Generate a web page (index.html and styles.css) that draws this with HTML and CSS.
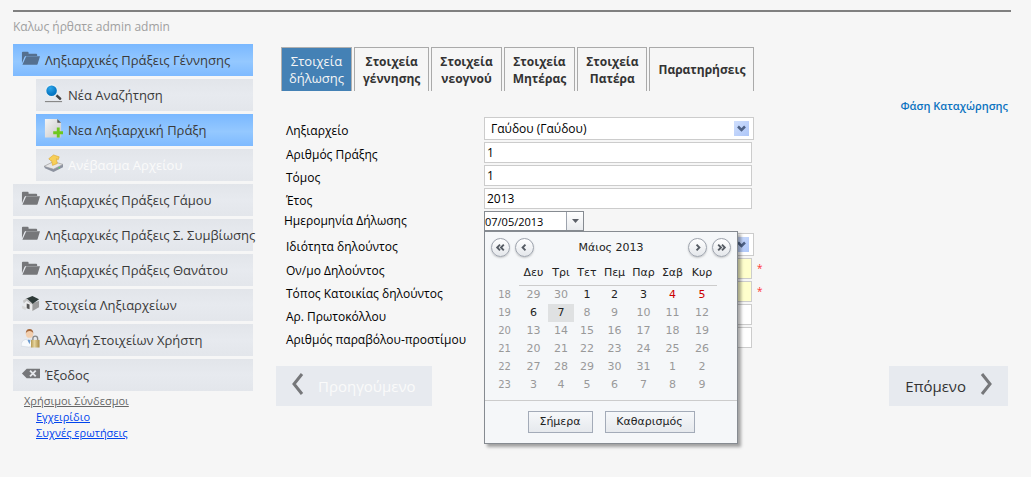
FILE: index.html
```html
<!DOCTYPE html>
<html lang="el">
<head>
<meta charset="utf-8">
<title>Στοιχεία δήλωσης</title>
<link rel="stylesheet" href="styles.css">
</head>
<body>
<svg class="defs" aria-hidden="true">
  <defs>
    <linearGradient id="paper" x1="0" y1="0" x2="1" y2="1"><stop offset="0" stop-color="#f4f4f4"/><stop offset="1" stop-color="#c8c8c8"/></linearGradient>
    <radialGradient id="lens" cx=".4" cy=".3"><stop offset="0" stop-color="#2ea6ea"/><stop offset="1" stop-color="#0878c4"/></radialGradient>
    <linearGradient id="gold" x1="0" y1="0" x2="1" y2="0"><stop offset="0" stop-color="#b59a55"/><stop offset=".4" stop-color="#e6d49c"/><stop offset="1" stop-color="#a88a42"/></linearGradient>
    <symbol id="folder" viewBox="0 0 20 20"><path d="M1 15V4q0-1 1-1h5q1 0 1 1v1h8q1 0 1 1v1.300H5.500q-1.500 0-2 1.500z"/><path d="M5.500 7.700H20l-2.500 8q-.3 1-1.500 1H1.500z"/></symbol>
  </defs>
</svg>
<div class="page">
  <hr class="rule">
  <p class="welcome">Καλως ήρθατε admin admin</p>
  <div class="columns">
    <nav class="sidebar">
      <a class="item active" href="#"><svg class="icon slate"><use href="#folder"/></svg>Ληξιαρχικές Πράξεις Γέννησης</a>
      <a class="item sub" href="#"><svg class="icon" viewBox="0 0 20 20"><path d="M1 18.500h18" stroke="#888" stroke-width="1.200"/><path d="M12 11l5 4.500" stroke="#444" stroke-width="2.600" stroke-linecap="round"/><circle cx="8" cy="7" r="6.300" fill="url(#lens)" stroke="#e9eef2" stroke-width="1.500"/></svg>Νέα Αναζήτηση</a>
      <a class="item sub active" href="#"><svg class="icon" viewBox="0 0 20 20"><path d="M1 0h13l4 4v15.500H1z" fill="url(#paper)"/><path d="M14 0l4 4h-4z" fill="#555"/><path d="M15 9v10.500M9.700 14.500h10.300" stroke="#6ec81e" stroke-width="3"/></svg>Νεα Ληξιαρχική Πράξη</a>
      <a class="item sub disabled" href="#"><svg class="icon" viewBox="0 0 20 20"><path d="M0 13l10-5 10 3-10 5z" fill="#e6e6e8" stroke="#999" stroke-width=".7"/><path d="M0 13l10 3v3L1 15zM10 16l10-5v3l-10 5z" fill="#8d93a0"/><path d="M7 7L5 5l5-4 6 2-1 3-2-1 1 5-5 2-1-5z" fill="#f7cf58" stroke="#d9a128" stroke-width=".6"/><circle cx="16" cy="14.500" r=".8" fill="#48e060"/></svg>Ανέβασμα Αρχείου</a>
      <a class="item" href="#"><svg class="icon gray"><use href="#folder"/></svg>Ληξιαρχικές Πράξεις Γάμου</a>
      <a class="item" href="#"><svg class="icon gray"><use href="#folder"/></svg>Ληξιαρχικές Πράξεις Σ. Συμβίωσης</a>
      <a class="item" href="#"><svg class="icon gray"><use href="#folder"/></svg>Ληξιαρχικές Πράξεις Θανάτου</a>
      <a class="item" href="#"><svg class="icon" viewBox="0 0 20 20"><path d="M4 8l8 2v8l-8-4z" fill="#ececec"/><path d="M12 10l7-3v7l-7 4z" fill="#9c9c9c"/><path d="M5 5l7-3 7 3.500-7 5z" fill="#2e3a38"/><path d="M2 7l4-2.500 6 5.500-1 1-5-4-3 3z" fill="#c4c4c4"/><path d="M6 10l3 1v5l-3-1z" fill="#555"/><path d="M1 12l4 2v3l-4-2z" fill="#d8d8d8"/></svg>Στοιχεία Ληξιαρχείων</a>
      <a class="item" href="#"><svg class="icon" viewBox="0 0 20 20"><path d="M0 18q0-6 5-7l3 1 4-1q4 1 4 7-8 2-16 0z" fill="#f8fafc" stroke="#c9d2de" stroke-width=".6"/><path d="M8 11l2 1-1 4-2-4z" fill="#6c9bd0"/><circle cx="9" cy="5.500" r="3.800" fill="#f3cfae"/><path d="M5 5q0-5 4-5t4 5q-1-3-4-3T5 5z" fill="#a5673a"/><path d="M12.500 12v-2q0-2.500 2.500-2.500t2.500 2.500v2" fill="none" stroke="#888" stroke-width="1.400"/><rect x="10.500" y="11.500" width="9" height="8" fill="url(#gold)"/></svg>Αλλαγή Στοιχείων Χρήστη</a>
      <a class="item" href="#"><svg class="icon" viewBox="0 0 20 20"><path d="M1 10l5-5h14v10H6z" fill="#76777a"/><path d="M9.500 7l6 6M15.500 7l-6 6" stroke="#e6e8ec" stroke-width="2"/></svg>Έξοδος</a>
      <div class="links">
        <span class="links-title">Χρήσιμοι Σύνδεσμοι</span>
        <a href="#">Εγχειρίδιο</a>
        <a href="#">Συχνές ερωτήσεις</a>
      </div>
    </nav>
    <main class="main">
      <div class="tabs" role="tablist">
        <button class="tab current" role="tab" aria-selected="true">Στοιχεία<br>δήλωσης</button>
        <button class="tab" role="tab">Στοιχεία<br>γέννησης</button>
        <button class="tab" role="tab">Στοιχεία<br>νεογνού</button>
        <button class="tab" role="tab">Στοιχεία<br>Μητέρας</button>
        <button class="tab" role="tab">Στοιχεία<br>Πατέρα</button>
        <button class="tab" role="tab">Παρατηρήσεις</button>
      </div>
      <p class="phase">Φάση Καταχώρησης</p>
      <form class="form">
        <label for="office">Ληξιαρχείο</label>
        <div class="select"><select id="office"><option>Γαύδου (Γαύδου)</option></select><svg class="arrow" viewBox="0 0 15 15"><path d="M4 5.500l3.500 3.500L11 5.500" fill="none" stroke="#4d6185" stroke-width="2.500"/></svg></div>
        <label for="act">Αριθμός Πράξης</label>
        <div class="field"><input id="act" type="text" value="1"></div>
        <label for="volume">Τόμος</label>
        <div class="field"><input id="volume" type="text" value="1"></div>
        <label for="year">Έτος</label>
        <div class="field"><input id="year" type="text" value="2013"></div>
        <label class="date-label" for="date">Ημερομηνία Δήλωσης</label>
        <div class="date">
          <input id="date" type="text" value="07/05/2013"><button type="button" class="drop" aria-label="Ημερολόγιο"><svg width="7" height="4" viewBox="0 0 7 4"><path d="M0 0h7L3.500 4z" fill="#5c6068"/></svg></button>
          <div class="calendar">
            <div class="cal-head">
              <button type="button" class="round" aria-label="Προηγούμενο έτος"><svg viewBox="0 0 18 18"><path d="M8.500 6l-3 3 3 3M12.500 6l-3 3 3 3"/></svg></button>
              <button type="button" class="round" aria-label="Προηγούμενος μήνας"><svg viewBox="0 0 18 18"><path d="M10 6L7 9l3 3"/></svg></button>
              <span class="cal-title">Μάιος 2013</span>
              <button type="button" class="round" aria-label="Επόμενος μήνας"><svg viewBox="0 0 18 18"><path d="M8 6l3 3-3 3"/></svg></button>
              <button type="button" class="round" aria-label="Επόμενο έτος"><svg viewBox="0 0 18 18"><path d="M5.500 6l3 3-3 3M9.500 6l3 3-3 3"/></svg></button>
            </div>
            <table class="days">
              <colgroup><col class="c29"><col class="c29"><col class="c25"><col class="c25"><col class="c29"><col class="c29"><col class="c29"><col class="c31"></colgroup>
              <thead><tr><td></td><th>Δευ</th><th>Τρι</th><th>Τετ</th><th>Πεμ</th><th>Παρ</th><th>Σαβ</th><th>Κυρ</th></tr></thead>
              <tbody>
                <tr><td class="week">18</td><td>29</td><td>30</td><td class="on">1</td><td class="on">2</td><td class="on">3</td><td class="rest">4</td><td class="rest">5</td></tr>
                <tr><td class="week">19</td><td class="on">6</td><td class="on today">7</td><td>8</td><td>9</td><td>10</td><td>11</td><td>12</td></tr>
                <tr><td class="week">20</td><td>13</td><td>14</td><td>15</td><td>16</td><td>17</td><td>18</td><td>19</td></tr>
                <tr><td class="week">21</td><td>20</td><td>21</td><td>22</td><td>23</td><td>24</td><td>25</td><td>26</td></tr>
                <tr><td class="week">22</td><td>27</td><td>28</td><td>29</td><td>30</td><td>31</td><td>1</td><td>2</td></tr>
                <tr><td class="week">23</td><td>3</td><td>4</td><td>5</td><td>6</td><td>7</td><td>8</td><td>9</td></tr>
              </tbody>
            </table>
            <div class="cal-foot"><button type="button" class="small">Σήμερα</button><button type="button" class="small wide">Καθαρισμός</button></div>
          </div>
        </div>
        <label for="capacity">Ιδιότητα δηλούντος</label>
        <div class="select"><select id="capacity"><option></option></select><svg class="arrow" viewBox="0 0 15 15"><path d="M4 5.500l3.500 3.500L11 5.500" fill="none" stroke="#4d6185" stroke-width="2.500"/></svg></div>
        <label for="name">Ον/μο Δηλούντος</label>
        <div class="field"><input id="name" class="required" type="text"><span class="star">*</span></div>
        <label for="place">Τόπος Κατοικίας δηλούντος</label>
        <div class="field"><input id="place" class="required" type="text"><span class="star">*</span></div>
        <label for="protocol">Αρ. Πρωτοκόλλου</label>
        <div class="field"><input id="protocol" type="text"></div>
        <label for="fine">Αριθμός παραβόλου-προστίμου</label>
        <div class="field"><input id="fine" type="text"></div>
      </form>
      <div class="pager">
        <button class="step" disabled><svg class="chevron" viewBox="0 0 12 22"><path d="M10 1L2 11l8 10"/></svg><span>Προηγούμενο</span></button>
        <button class="step next"><span>Επόμενο</span><svg class="chevron" viewBox="0 0 12 22"><path d="M2 1l8 10-8 10"/></svg></button>
      </div>
    </main>
  </div>
</div>
</body>
</html>
```
FILE: styles.css
```css
* { box-sizing: border-box; }
body { margin: 0; background: #f6f6f6; color: #333; font-family: "Open Sans", "Noto Sans", sans-serif; font-size: 12px; }
button, input, select { font: inherit; color: inherit; margin: 0; }
.defs { position: absolute; width: 0; height: 0; }
.page { min-height: 100vh; padding: 10px 20px 0 13px; }
.rule { height: 2px; margin: 0; border: 0; background: #808080; }
.welcome { margin: 6px 0 8px; line-height: 18px; color: #a0a0a0; }
.columns { display: flex; gap: 23px; }

.sidebar { width: 240px; flex: none; display: flex; flex-direction: column; gap: 3px; }
.item { display: flex; align-items: center; gap: 5px; height: 32px; padding-left: 8px; font-size: 13px; line-height: 32px; white-space: nowrap; color: #3a3a3a; text-decoration: none; background: linear-gradient(#e2e5ea, #e7eaef 50%, #e3e6eb); }
.item.sub { margin-left: 23px; }
.item.active { background: linear-gradient(#7ab8ff, #94c8ff 55%, #7ebaff); }
.item.disabled { color: #fafafa; }
.icon { width: 19px; height: 19px; flex: none; margin-bottom: 4px; fill: none; }
.icon.gray { fill: #76777a; }
.icon.slate { fill: #55708f; }
.links { display: flex; flex-direction: column; align-items: flex-start; margin-top: -1px; padding-left: 11px; font-size: 11px; line-height: 16px; }
.links-title { color: #666; text-decoration: underline; }
.links a { margin-left: 12px; color: #0044ee; }

.main { flex: 1; padding: 3px 3px 0 0; }
.tabs { display: flex; gap: 2px; padding-left: 5px; }
.tab { height: 44px; padding: 0 8px; border: 1px solid #aaa; border-bottom: 0; background: none; font-size: 12px; font-weight: bold; line-height: 17px; white-space: nowrap; }
.tab.current { padding: 0 7px; background: #4481b5; border-color: #b0b0b0; color: #f6f6f6; font-size: 13px; font-weight: normal; }
.phase { margin: 6px 0 3px; line-height: 17px; text-align: right; font-size: 11px; font-weight: 600; color: #0a72c0; }

.form { display: grid; grid-template-columns: 198px 270px; row-gap: 2px; padding-left: 10px; color: #000; }
.form label { align-self: center; padding-top: 4px; line-height: 16px; white-space: nowrap; }
.form .date-label { margin-left: -2px; padding-top: 0; }
.select { position: relative; }
.select select { display: block; width: 100%; height: 23px; padding: 0 6px; border: 1px solid #ccc; border-radius: 0; background: #fff; appearance: none; }
.arrow { position: absolute; top: 4px; right: 5px; width: 15px; height: 15px; background: linear-gradient(135deg, #d0dffd, #adc6f8); pointer-events: none; }
.field { display: flex; gap: 5px; }
.field input { width: 268px; flex: none; height: 21px; padding: 0 2px; border: 1px solid #ccc; background: #fff; }
.field .required { background: #ffffcc; }
.star { color: #f33; font-size: 10px; line-height: 20px; }
.date { position: relative; display: flex; width: 100px; height: 20px; border: 1px solid #868b91; background: #fff; }
.date input { flex: 1; min-width: 0; padding: 0; border: 0; background: none; font-size: 11px; }
.drop { display: flex; align-items: center; justify-content: center; width: 17px; padding: 0; border: 0; border-left: 1px solid #9da3ad; background: linear-gradient(#fff, #e9ebee); }

.calendar { position: absolute; z-index: 2; top: 19px; left: -1px; width: 254px; border: 1px solid #868b91; background: #f5f7f9; box-shadow: 3px 3px 3px rgba(0, 0, 0, .35); font-family: "DejaVu Sans", sans-serif; font-size: 11px; color: #222; }
.cal-head { display: flex; align-items: center; gap: 5px; padding: 6px 6px 0; }
.round { display: flex; width: 19px; height: 19px; padding: 0; border: 1px solid #9da3ad; border-radius: 50%; background: linear-gradient(#fff, #e4e7eb); box-shadow: 0 1px 2px rgba(0, 0, 0, .2); }
.round svg { width: 17px; height: 17px; fill: none; stroke: #555b63; stroke-width: 2; }
.cal-title { flex: 1; text-align: center; }
.days { width: 226px; margin: 8px 0 0 5px; border-collapse: collapse; table-layout: fixed; text-align: center; color: #999; }
.days td, .days th { height: 18px; padding: 0; line-height: 16px; font-weight: normal; }
.days th { height: 20px; padding-bottom: 4px; border-bottom: 1px solid #ccc; color: #222; }
.c25 { width: 26px; }
.c29 { width: 29px; }
.c31 { width: 30px; }
.days .week { font-size: 10px; }
.days .on { color: #222; }
.days .rest { color: #c00; }
.days .today { background: #dfe1e2; }
.cal-foot { display: flex; justify-content: center; gap: 12px; margin-top: 6px; padding: 10px 0; border-top: 1px solid #ccc; }
.small { width: 65px; height: 22px; padding: 0; border: 1px solid #a3abb8; background: linear-gradient(#f6f8fa, #e6e9ed); }
.small.wide { width: 90px; }

.pager { display: flex; justify-content: space-between; margin-top: 18px; }
.step { display: flex; align-items: center; gap: 14px; height: 40px; padding: 0 16px; border: 0; background: #e7eaef; font-size: 15px; }
.step:disabled { color: #fafafa; }
.chevron { width: 12px; height: 22px; margin-bottom: 4px; fill: none; stroke: #76777a; stroke-width: 3; }
```
